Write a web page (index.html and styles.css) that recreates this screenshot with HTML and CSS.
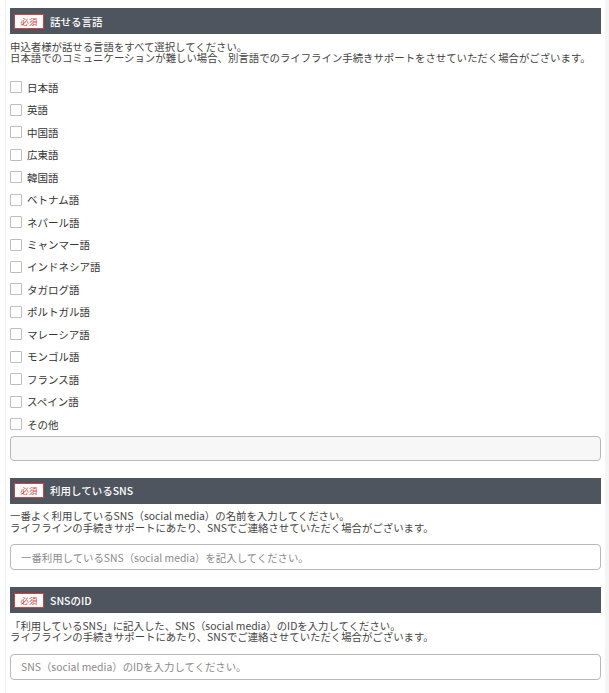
FILE: index.html
```html
<!DOCTYPE html>
<html lang="ja">
<head>
<meta charset="UTF-8">
<meta name="viewport" content="width=device-width, initial-scale=1.0">
<title>申込フォーム</title>
<link rel="stylesheet" href="styles.css">
</head>
<body>

<div class="page">
    <div class="field">
        <div class="field-head"><span class="required">必須</span>話せる言語</div>
        <p class="note">申込者様が話せる言語をすべて選択してください。<br>日本語でのコミュニケーションが難しい場合、別言語でのライフライン手続きサポートをさせていただく場合がございます。</p>
        <div class="checks">
            <label class="check"><input type="checkbox" name="lang">日本語</label>
            <label class="check"><input type="checkbox" name="lang">英語</label>
            <label class="check"><input type="checkbox" name="lang">中国語</label>
            <label class="check"><input type="checkbox" name="lang">広東語</label>
            <label class="check"><input type="checkbox" name="lang">韓国語</label>
            <label class="check"><input type="checkbox" name="lang">ベトナム語</label>
            <label class="check"><input type="checkbox" name="lang">ネパール語</label>
            <label class="check"><input type="checkbox" name="lang">ミャンマー語</label>
            <label class="check"><input type="checkbox" name="lang">インドネシア語</label>
            <label class="check"><input type="checkbox" name="lang">タガログ語</label>
            <label class="check"><input type="checkbox" name="lang">ポルトガル語</label>
            <label class="check"><input type="checkbox" name="lang">マレーシア語</label>
            <label class="check"><input type="checkbox" name="lang">モンゴル語</label>
            <label class="check"><input type="checkbox" name="lang">フランス語</label>
            <label class="check"><input type="checkbox" name="lang">スペイン語</label>
            <label class="check"><input type="checkbox" name="lang">その他</label>
        </div>
        <input type="text" class="text-input other" disabled>
    </div>

    <div class="field">
        <div class="field-head"><span class="required">必須</span>利用しているSNS</div>
        <p class="note">一番よく利用しているSNS（social media）の名前を入力してください。<br>ライフラインの手続きサポートにあたり、SNSでご連絡させていただく場合がございます。</p>
        <input type="text" class="text-input" placeholder="一番利用しているSNS（social media）を記入してください。">
    </div>

    <div class="field">
        <div class="field-head"><span class="required">必須</span>SNSのID</div>
        <p class="note">「利用しているSNS」に記入した、SNS（social media）のIDを入力してください。<br>ライフラインの手続きサポートにあたり、SNSでご連絡させていただく場合がございます。</p>
        <input type="text" class="text-input" placeholder="SNS（social media）のIDを入力してください。">
    </div>
</div>

</body>
</html>
```

FILE: styles.css
```css
html {
    background-color: #f4f4f4;
}
body {
    margin: 0;
    padding: 0;
    font-family: "Noto Sans CJK JP", "Noto Sans", sans-serif;
    color: #333;
    background: linear-gradient(to right, #fff 5px, transparent 5px);
    min-height: 693px;
}
.page {
    width: 591px;
    margin-left: 5px;
    padding: 8px 4px 0 4px;
    border-left: 1px solid #ededed;
    background-color: #fff;
    min-height: 685px;
}
.field {
    margin-bottom: 17px;
}
.field-head {
    display: flex;
    align-items: center;
    height: 26px;
    padding-left: 4px;
    background-color: #4f555e;
    color: #fff;
    font-size: 10.5px;
    font-weight: 500;
}
.required {
    display: inline-block;
    width: 28px;
    height: 13px;
    line-height: 13px;
    margin-right: 6px;
    border: 1.5px solid #d8403c;
    background-color: #fff;
    color: #d8403c;
    font-size: 8.5px;
    font-weight: normal;
    text-align: center;
}
.note {
    margin: 6.5px 0 0;
    font-size: 10.4px;
    line-height: 11.5px;
    color: #444;
    white-space: nowrap;
}
.checks {
    display: flex;
    flex-direction: column;
    margin-top: 12.5px;
}
.check {
    display: flex;
    align-items: center;
    height: 22.47px;
    font-size: 10.5px;
    color: #333;
}
.check input {
    appearance: none;
    width: 12px;
    height: 12px;
    margin: 0 5px 0 0;
    border: 1px solid #bdbdbd;
    border-radius: 1px;
    background-color: #fff;
}
.text-input {
    display: block;
    box-sizing: border-box;
    width: 100%;
    height: 26px;
    margin-top: 11px;
    padding: 0 10px;
    border: 1px solid #b9b9b9;
    border-radius: 4px;
    background-color: #fff;
    font-family: inherit;
    font-size: 10.4px;
    color: #333;
}
.text-input::placeholder {
    color: #8a8a8a;
}
.text-input.other {
    height: 25px;
    margin-top: 0;
    background-color: #f7f7f7;
}
```
